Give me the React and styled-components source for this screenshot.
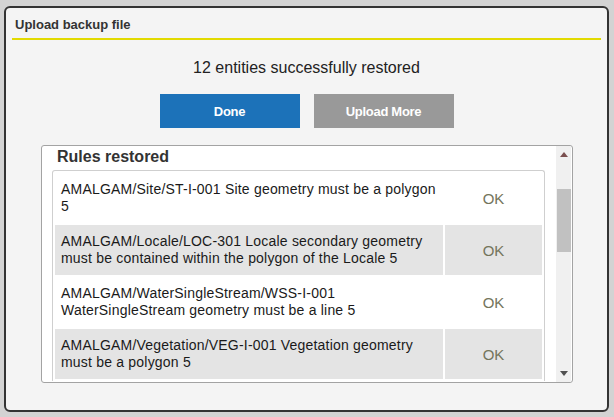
import React from 'react';
import styled, { createGlobalStyle } from 'styled-components';

const GlobalStyle = createGlobalStyle`
  html, body {
    margin: 0;
    padding: 0;
    background: #d3d3d3;
    font-family: "Liberation Sans", Arial, sans-serif;
  }
`;

const rules = [
  { text: 'AMALGAM/Site/ST-I-001 Site geometry must be a polygon 5', status: 'OK' },
  { text: 'AMALGAM/Locale/LOC-301 Locale secondary geometry must be contained within the polygon of the Locale 5', status: 'OK' },
  { text: 'AMALGAM/WaterSingleStream/WSS-I-001 WaterSingleStream geometry must be a line 5', status: 'OK' },
  { text: 'AMALGAM/Vegetation/VEG-I-001 Vegetation geometry must be a polygon 5', status: 'OK' },
];

export default function App() {
  return (
    <>
      <GlobalStyle />
      <Dialog>
        <Header>
          <Title>Upload backup file</Title>
        </Header>
        <Message>12 entities successfully restored</Message>
        <ButtonRow>
          <Button $primary>Done</Button>
          <Button>Upload More</Button>
        </ButtonRow>
        <ResultBox>
          <Content>
            <Heading>Rules restored</Heading>
            <RulesTable>
              <tbody>
                {rules.map((r, i) => (
                  <tr key={i}>
                    <RuleCell $odd={i % 2 === 1}>{r.text}</RuleCell>
                    <StatusCell $odd={i % 2 === 1}>{r.status}</StatusCell>
                  </tr>
                ))}
              </tbody>
            </RulesTable>
          </Content>
          <Scrollbar>
            <ScrollButton>
              <svg width="8" height="5" viewBox="0 0 8 5">
                <path d="M0 5 L4 0 L8 5 Z" fill="#7a4f4f" />
              </svg>
            </ScrollButton>
            <Track>
              <Thumb $top={26} $height={63} />
            </Track>
            <ScrollButton>
              <svg width="8" height="5" viewBox="0 0 8 5">
                <path d="M0 0 L8 0 L4 5 Z" fill="#505050" />
              </svg>
            </ScrollButton>
          </Scrollbar>
        </ResultBox>
      </Dialog>
    </>
  );
}

const Dialog = styled.div`
  box-sizing: border-box;
  margin: 6px 0 0 4px;
  width: 605px;
  height: 406px;
  border: 2px solid #333;
  border-radius: 6px;
  background: #f4f4f4;
  display: flex;
  flex-direction: column;
`;

const Header = styled.div`
  margin: 0 6px;
  padding: 9px 0 5px 3px;
  border-bottom: 2px solid #e2da00;
`;

const Title = styled.div`
  font-size: 13px;
  line-height: 16px;
  font-weight: bold;
  color: #333;
`;

const Message = styled.div`
  margin: 18px 0 16px;
  text-align: center;
  font-size: 16px;
  line-height: 20px;
  color: #222;
`;

const ButtonRow = styled.div`
  display: flex;
  justify-content: center;
  gap: 14px;
`;

const Button = styled.button`
  width: 140px;
  height: 34px;
  border: none;
  padding: 0;
  background: ${p => (p.$primary ? '#1c72b9' : '#999999')};
  color: #fff;
  font-family: "Liberation Sans", Arial, sans-serif;
  font-size: 13px;
  font-weight: bold;
  letter-spacing: -0.3px;
  cursor: pointer;
`;

const ResultBox = styled.div`
  box-sizing: border-box;
  margin: 17px 0 0 35px;
  width: 532px;
  height: 238px;
  border: 1px solid #a3a3a3;
  border-radius: 3px;
  background: #fff;
  display: flex;
  overflow: hidden;
`;

const Content = styled.div`
  flex: 1;
  overflow: hidden;
  padding-left: 10px;
`;

const Heading = styled.div`
  height: 24px;
  line-height: 22px;
  padding-left: 5px;
  font-size: 16px;
  font-weight: bold;
  color: #333;
`;

const RulesTable = styled.table`
  width: 493px;
  border: 1px solid #cfcfcf;
  border-bottom: none;
  border-radius: 3px 3px 0 0;
  border-spacing: 2px;
  background: #fff;
`;

const RuleCell = styled.td`
  height: 50px;
  box-sizing: border-box;
  padding: 0 2px 0 6px;
  font-size: 14px;
  line-height: 17px;
  letter-spacing: 0.2px;
  color: #1a1a1a;
  vertical-align: middle;
  background: ${p => (p.$odd ? '#e4e4e4' : '#fff')};
`;

const StatusCell = styled.td`
  width: 97px;
  padding: 0;
  text-align: center;
  vertical-align: middle;
  font-size: 15px;
  color: #74745c;
  background: ${p => (p.$odd ? '#e4e4e4' : '#fff')};
`;

const Scrollbar = styled.div`
  width: 15px;
  margin-right: 1px;
  background: #f0f0f0;
  display: flex;
  flex-direction: column;
`;

const ScrollButton = styled.div`
  height: 17px;
  display: flex;
  align-items: center;
  justify-content: center;
`;

const Track = styled.div`
  flex: 1;
  padding-left: 1px;
`;

const Thumb = styled.div`
  margin-top: ${p => p.$top}px;
  height: ${p => p.$height}px;
  background: #c1c1c1;
`;
